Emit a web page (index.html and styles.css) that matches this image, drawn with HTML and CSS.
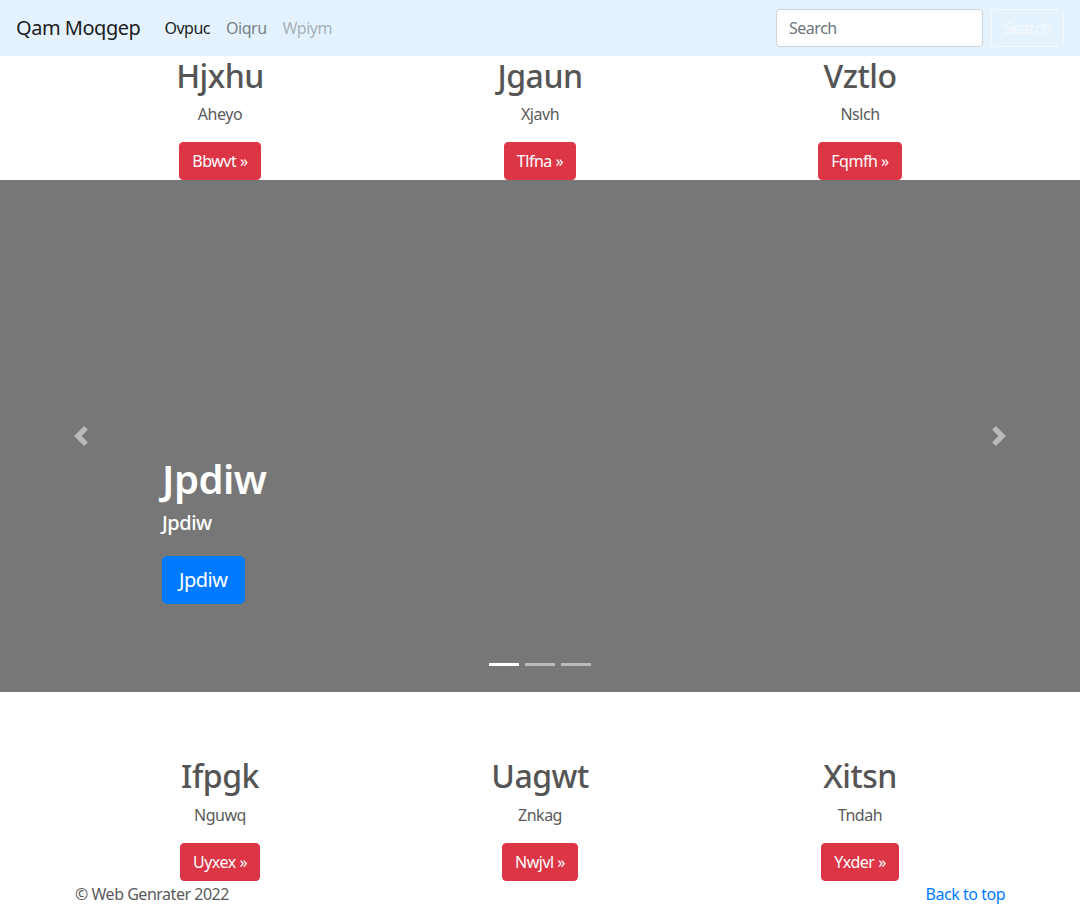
FILE: index.html
```html
<!DOCTYPE html>
<html lang="en">
<head>
<meta charset="utf-8">
<title>Qam Moqgep</title>
<link rel="stylesheet" href="styles.css">
</head>
<body>
<header class="navbar">
  <a class="brand" href="#">Qam Moqgep</a>
  <nav class="nav">
    <a class="nav-link active" href="#">Ovpuc</a>
    <a class="nav-link" href="#">Oiqru</a>
    <a class="nav-link disabled" href="#">Wpiym</a>
  </nav>
  <form class="search">
    <input class="search-input" type="text" placeholder="Search">
    <button class="btn-outline-light" type="button">Search</button>
  </form>
</header>

<main>
  <section class="container">
    <div class="row">
      <div class="col">
        <h2 class="col-title">Hjxhu</h2>
        <p class="col-text">Aheyo</p>
        <p class="col-action"><a class="btn-danger" href="#">Bbwvt »</a></p>
      </div>
      <div class="col">
        <h2 class="col-title">Jgaun</h2>
        <p class="col-text">Xjavh</p>
        <p class="col-action"><a class="btn-danger" href="#">Tlfna »</a></p>
      </div>
      <div class="col">
        <h2 class="col-title">Vztlo</h2>
        <p class="col-text">Nslch</p>
        <p class="col-action"><a class="btn-danger" href="#">Fqmfh »</a></p>
      </div>
    </div>
  </section>

  <section class="carousel">
    <div class="carousel-caption">
      <h1 class="caption-title">Jpdiw</h1>
      <p class="caption-lead">Jpdiw</p>
      <p class="caption-action"><a class="btn-primary" href="#">Jpdiw</a></p>
    </div>
    <a class="carousel-control prev" href="#" aria-label="Previous">
      <svg width="20" height="20" viewBox="0 0 8 8"><path fill="#fff" d="M5.25 0l-4 4 4 4 1.5-1.5L4.25 4l2.5-2.5L5.25 0z"/></svg>
    </a>
    <a class="carousel-control next" href="#" aria-label="Next">
      <svg width="20" height="20" viewBox="0 0 8 8"><path fill="#fff" d="M2.75 0l-1.5 1.5L3.75 4l-2.5 2.5L2.75 8l4-4-4-4z"/></svg>
    </a>
    <ol class="indicators">
      <li class="indicator active"></li>
      <li class="indicator"></li>
      <li class="indicator"></li>
    </ol>
  </section>

  <section class="container lower">
    <div class="row">
      <div class="col">
        <h2 class="col-title">Ifpgk</h2>
        <p class="col-text">Nguwq</p>
        <p class="col-action"><a class="btn-danger" href="#">Uyxex »</a></p>
      </div>
      <div class="col">
        <h2 class="col-title">Uagwt</h2>
        <p class="col-text">Znkag</p>
        <p class="col-action"><a class="btn-danger" href="#">Nwjvl »</a></p>
      </div>
      <div class="col">
        <h2 class="col-title">Xitsn</h2>
        <p class="col-text">Tndah</p>
        <p class="col-action"><a class="btn-danger" href="#">Yxder »</a></p>
      </div>
    </div>
  </section>

  <footer class="container footer">
    <p class="copyright">© Web Genrater 2022</p>
    <a class="back-top" href="#">Back to top</a>
  </footer>
</main>
</body>
</html>
```

FILE: styles.css
```css
* { box-sizing: border-box; }

html, body {
  margin: 0;
  padding: 0;
}

body {
  font-family: "Noto Sans", "Open Sans", "DejaVu Sans", sans-serif;
  font-size: 16px;
  line-height: 1.5;
  letter-spacing: -0.03em;
  color: #5a5a5a;
  background: #fff;
}

a { text-decoration: none; }

/* navbar */
.navbar {
  height: 56px;
  background: #e3f2fd;
  display: flex;
  align-items: center;
  padding: 8px 16px;
}

.brand {
  font-size: 20px;
  line-height: 30px;
  color: rgba(0, 0, 0, 0.9);
  margin-right: 16px;
  padding: 5px 0;
}

.nav {
  display: flex;
  flex: 1;
}

.nav-link {
  padding: 8px;
  color: rgba(0, 0, 0, 0.5);
  line-height: 24px;
}

.nav-link.active { color: rgba(0, 0, 0, 0.9); }
.nav-link.disabled { color: rgba(0, 0, 0, 0.3); }

.search {
  display: flex;
  align-items: center;
  gap: 8px;
}

.search-input {
  width: 207px;
  height: 38px;
  padding: 6px 12px;
  font: inherit;
  font-size: 16px;
  letter-spacing: -0.03em;
  color: #495057;
  background: #fff;
  border: 1px solid #ced4da;
  border-radius: 4px;
}

.search-input::placeholder { color: #6c757d; }

.btn-outline-light {
  height: 38px;
  width: 73px;
  padding: 6px 0;
  font: inherit;
  font-size: 16px;
  letter-spacing: -0.03em;
  color: #f8f9fa;
  background: transparent;
  border: 1px solid #f8f9fa;
  border-radius: 4px;
}

/* marketing columns */
.container {
  width: 960px;
  margin: 0 auto;
  padding: 0 15px;
}

.row {
  display: grid;
  grid-template-columns: repeat(3, 1fr);
  margin: 0 -15px;
}

.col {
  padding: 0 15px;
  text-align: center;
}

.col-title {
  margin: 0 0 8px;
  padding-top: 1px;
  height: 38.4px;
  font-size: 32px;
  line-height: 1.2;
  font-weight: 500;
  color: #555;
}

.col-text {
  margin: 0 12px 16px;
  line-height: 24px;
}

.col-action {
  margin: 0;
  height: 38px;
}

.btn-danger {
  display: inline-block;
  padding: 6px 12px;
  line-height: 24px;
  font-size: 16px;
  color: #fff;
  background: #dc3545;
  border: 1px solid #dc3545;
  border-radius: 4px;
}

.lower { margin-top: 64px; }

/* carousel */
.carousel {
  position: relative;
  height: 512px;
  background: #777;
}

.carousel-caption {
  position: absolute;
  left: 162px;
  right: 162px;
  bottom: 48px;
  padding: 20px 0;
  color: #fff;
}

.caption-title {
  margin: 0 0 7px;
  font-size: 40px;
  line-height: 48px;
  font-weight: 600;
}

.caption-lead {
  margin: 0 0 20px;
  font-size: 20px;
  line-height: 26px;
  font-weight: 500;
}

.caption-action {
  margin: 0 0 16px;
  height: 52px;
}

.btn-primary {
  display: inline-block;
  padding: 8px 16px;
  font-size: 20px;
  line-height: 30px;
  color: #fff;
  background: #007bff;
  border: 1px solid #007bff;
  border-radius: 5px;
}

.carousel-control {
  position: absolute;
  top: 0;
  bottom: 0;
  width: 162px;
  display: flex;
  align-items: center;
  justify-content: center;
  opacity: 0.5;
}

.carousel-control svg { display: block; }
.carousel-control.prev { left: 0; }
.carousel-control.next { right: 0; }

.indicators {
  position: absolute;
  left: 0;
  right: 0;
  bottom: 16px;
  margin: 0;
  padding: 0;
  list-style: none;
  display: flex;
  justify-content: center;
}

.indicator {
  width: 30px;
  height: 3px;
  margin: 10px 3px;
  background: #fff;
  opacity: 0.5;
}

.indicator.active { opacity: 1; }

/* footer */
.footer {
  display: flex;
  justify-content: space-between;
  align-items: flex-start;
  padding-top: 1px;
}

.copyright {
  margin: 0;
  line-height: 24px;
  color: #5a5a5a;
}

.back-top {
  color: #007bff;
  line-height: 24px;
}
```
